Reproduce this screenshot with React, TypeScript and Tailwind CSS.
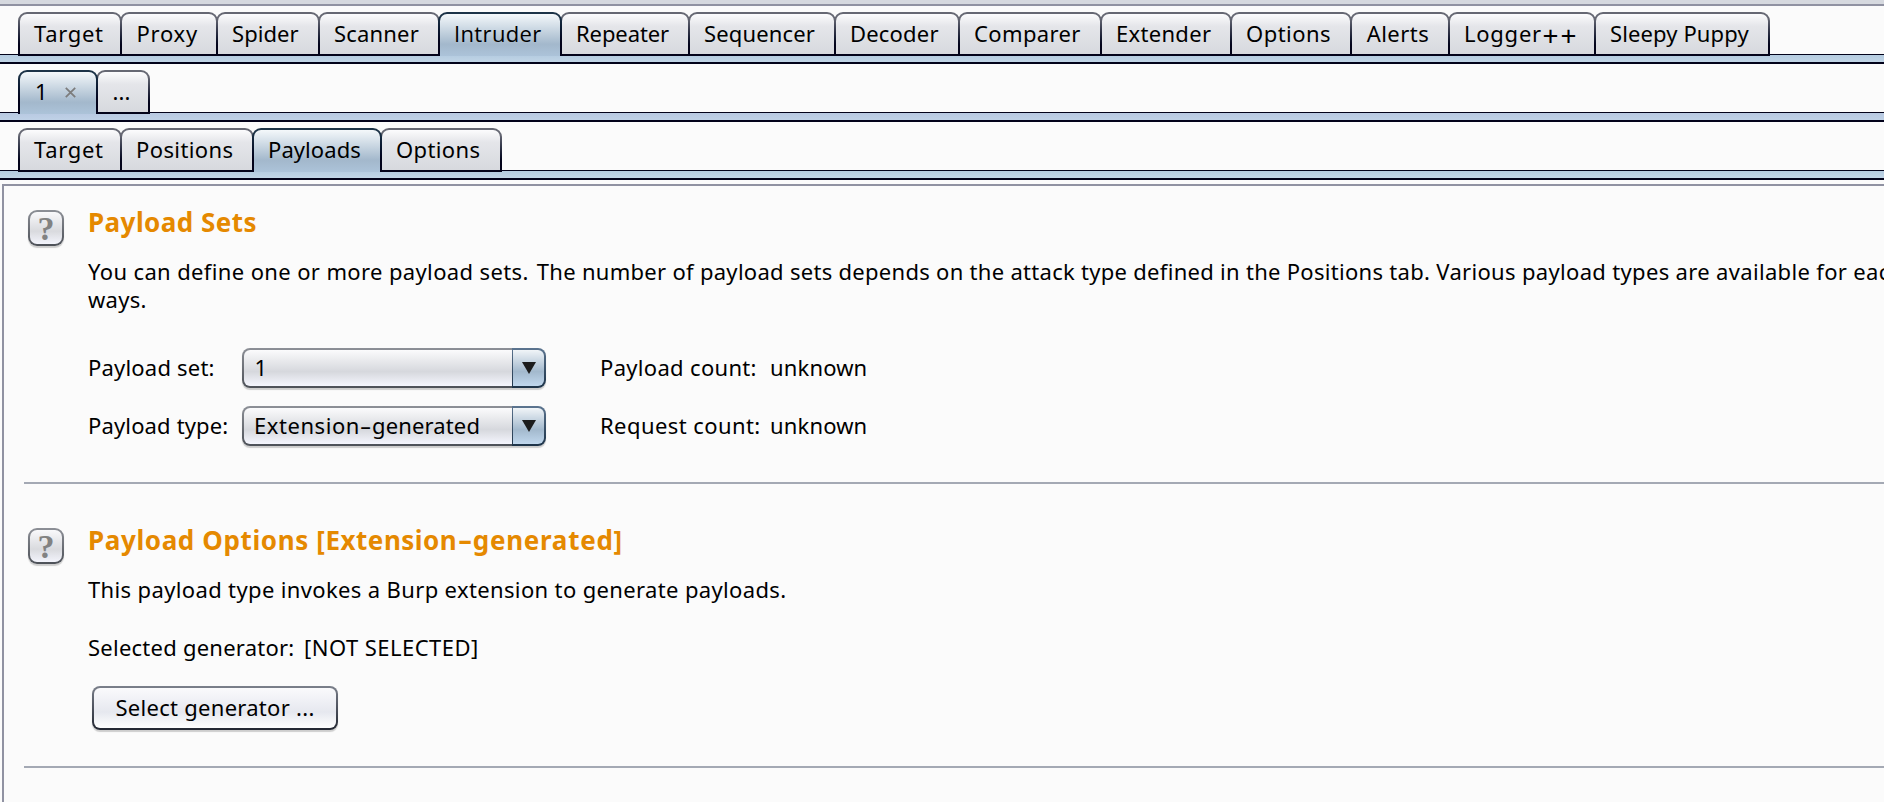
import type { ReactNode } from "react";

type TabProps = { width: string; selected?: boolean; className?: string; children: ReactNode };

function Tab({ width, selected = false, className = "", children }: TabProps) {
  return (
    <div
      className={`${width} ${className} box-border flex h-[44px] shrink-0 rounded-t-[9px] px-[2px] pt-[2px] ${
        selected
          ? "relative z-10 bg-linear-to-b from-[#1c3347] from-10% to-[#02021a] to-70% pb-0"
          : "bg-linear-to-b from-[#666873] from-15% to-[#03031a] to-75% pb-[2px]"
      }`}
    >
      <div
        className={`flex flex-1 items-start overflow-hidden rounded-t-[7px] pl-[14px] pt-[4px] leading-[30px] whitespace-nowrap ${
          selected
            ? "bg-linear-to-b from-[#f4f8fa] via-[#a3b8cc] via-72% to-[#acc3d9]"
            : "bg-linear-to-b from-[#fcfcfd] via-[#e5e6ea] via-30% to-[#d7d9de]"
        }`}
      >
        {children}
      </div>
    </div>
  );
}

function TabStrip({ children, tint = "from-[#b4cbe0] to-[#c1d5e6]" }: { children: ReactNode; tint?: string }) {
  return (
    <div className="h-[58px] pt-[6px]">
      <div className="relative z-10 flex pl-[18px]">{children}</div>
      <div className={`-mt-[2px] h-[10px] border-t border-b-2 border-[#02021a] bg-linear-to-b ${tint}`} />
    </div>
  );
}

const mainTabs = [
  { label: "Target", width: "w-[104px]", text: "tracking-[0.7px]" },
  { label: "Proxy", width: "w-[98px]", text: "tracking-[0.76px] pl-[0.5px]" },
  { label: "Spider", width: "w-[104px]", text: "tracking-[0.05px]" },
  { label: "Scanner", width: "w-[122px]", text: "tracking-[0.19px]" },
  { label: "Intruder", width: "w-[124px]", text: "font-['Open_Sans'] tracking-[0.36px]", selected: true },
  { label: "Repeater", width: "w-[130px]", text: "tracking-[-0.09px]" },
  { label: "Sequencer", width: "w-[148px]", text: "tracking-[0.14px]" },
  { label: "Decoder", width: "w-[126px]", text: "tracking-[0.19px]" },
  { label: "Comparer", width: "w-[144px]", text: "tracking-[0.38px]" },
  { label: "Extender", width: "w-[132px]", text: "tracking-[0.31px]" },
  { label: "Options", width: "w-[122px]", text: "tracking-[0.48px]" },
  { label: "Alerts", width: "w-[100px]", text: "tracking-[0.47px] pl-[0.7px]" },
  { label: "Logger", suffix: "++", width: "w-[148px]", text: "tracking-[0.75px]" },
  { label: "Sleepy Puppy", width: "w-[176px]", text: "tracking-[0.12px]" },
];

const intruderTabs = [
  { label: "Target", width: "w-[104px]", text: "tracking-[0.7px]" },
  { label: "Positions", width: "w-[134px]", text: "tracking-[0.39px]" },
  { label: "Payloads", width: "w-[130px]", text: "tracking-[0.08px]", selected: true },
  { label: "Options", width: "w-[122px]", text: "tracking-[0.38px]" },
];

function HelpButton() {
  return (
    <button className="mt-[6px] flex h-[36px] w-[36px] shrink-0 rounded-[9px] bg-linear-to-b from-[#8d9097] to-[#4d5158] p-[2px] shadow-[0_2px_1px_rgba(0,0,0,0.18)]">
      <span className="flex h-full w-full items-center justify-center rounded-[7px] bg-linear-to-b from-[#f9f9fb] via-[#d9dade] via-60% to-[#f3f4fc] pt-[2px] font-['Liberation_Serif'] text-[34px] leading-[30px] font-bold text-[#828282]">
        ?
      </span>
    </button>
  );
}

function Select({ children }: { children: ReactNode }) {
  return (
    <div className="flex h-[40px] w-[304px] rounded-[8px] shadow-[0_2px_1px_rgba(0,0,0,0.18)]">
      <div className="flex w-[270px] rounded-l-[8px] bg-linear-to-b from-[#8d9097] to-[#4d5158] py-[2px] pl-[2px]">
        <div className="flex-1 rounded-l-[6px] bg-linear-to-b from-[#fbfbfc] via-[#d6d8dd] via-60% to-[#f5f6fe] pt-[2px] pl-[10px] leading-[30px] whitespace-nowrap">
          {children}
        </div>
      </div>
      <div className="flex w-[34px] rounded-r-[8px] bg-linear-to-b from-[#5c7590] to-[#1d3348] py-[2px] pr-[2px] pl-px">
        <div className="flex-1 rounded-r-[6px] bg-linear-to-b from-[#f1f5f8] via-[#a3b9cd] via-60% to-[#c0d7ed] pt-[12px] pl-[9px]">
          <svg width="14" height="12" viewBox="0 0 14 12">
            <path d="M0 0H14L7 12Z" fill="#1c1c1c" />
          </svg>
        </div>
      </div>
    </div>
  );
}

function Hyphen({ className }: { className: string }) {
  return (
    <span className={`${className} inline-block text-center`}>
      <span className="inline-block scale-x-165">-</span>
    </span>
  );
}

export default function App() {
  return (
    <div className="flex h-[802px] w-[1884px] flex-col overflow-hidden bg-[#fbfbfb] font-['Noto_Sans',sans-serif] text-[22px] text-black">
      <div className="h-[6px] shrink-0 border-b-2 border-[#9092a2] bg-[#d6d9df]" />
      <div className="shrink-0">
        <TabStrip>
          {mainTabs.map((t, i) => (
            <Tab key={t.label} width={t.width} selected={t.selected} className={i ? "-ml-[2px]" : ""}>
              <span className={t.text}>{t.label}</span>
              {t.suffix && <span className="pt-[2px] pl-[0.5px] text-[28px] tracking-[2.2px]">{t.suffix}</span>}
            </Tab>
          ))}
        </TabStrip>
        <TabStrip tint="from-[#b8c9e2] to-[#bfd1e6]">
          <Tab width="w-[80px]" selected>
            <span className="pl-[1px]">1</span>
            <svg className="mt-[11px] ml-[17px]" width="11" height="11" viewBox="0 0 11 11">
              <path d="M0.8 0.8L10.2 10.2M10.2 0.8L0.8 10.2" stroke="#7d7d7d" strokeWidth="1.8" />
            </svg>
          </Tab>
          <Tab width="w-[54px]" className="-ml-[2px]">
            <span className="pl-[0.5px] tracking-[0.1px]">...</span>
          </Tab>
        </TabStrip>
        <TabStrip>
          {intruderTabs.map((t, i) => (
            <Tab key={t.label} width={t.width} selected={t.selected} className={i ? "-ml-[2px]" : ""}>
              <span className={t.text}>{t.label}</span>
            </Tab>
          ))}
        </TabStrip>
      </div>

      <div className="mt-[4px] ml-[2px] flex-1 border-t-2 border-l-2 border-[#9092a2]">
        <section className="flex h-[296px] pt-[18px] pl-[24px]">
          <HelpButton />
          <div className="ml-[24px] min-w-0 flex-1">
            <h2 className="text-[26px] leading-[36px] font-bold tracking-[0.45px] text-[#e58900]">Payload Sets</h2>
            <p className="mt-[17px] leading-[28px] whitespace-nowrap">
              <span className="inline-block w-[448.8px] tracking-[0.37px]">You can define one or more payload sets.</span>
              <span className="inline-block w-[899.5px] tracking-[0.29px]">
                The number of payload sets depends on the attack type defined in the Positions tab.
              </span>
              <span className="inline-block w-[410px] tracking-[0.33px]">Various payload types are available for</span>
              <span className="inline-block pl-[7px] tracking-[0.3px]">each</span>
              <br />
              <span className="tracking-[0.28px]">ways.</span>
            </p>
            <div className="mt-[35px] grid grid-cols-[154px_358px_170px_200px] gap-y-[18px] leading-[30px] whitespace-nowrap">
              <span className="pt-[4px] tracking-[0.2px]">Payload set:</span>
              <Select>
                <span className="pl-[0.5px]">1</span>
              </Select>
              <span className="pt-[4px] tracking-[0.32px]">Payload count:</span>
              <span className="pt-[4px] tracking-[0.15px]">unknown</span>
              <span className="pt-[4px] tracking-[0.15px]">Payload type:</span>
              <Select>
                <span className="tracking-[0.56px]">Extension</span>
                <Hyphen className="w-[12px]" />
                <span className="tracking-[0.14px]">generated</span>
              </Select>
              <span className="pt-[4px] tracking-[0.42px]">Request count:</span>
              <span className="pt-[4px] tracking-[0.15px]">unknown</span>
            </div>
          </div>
        </section>
        <div className="ml-[20px] h-[2px] bg-[#a4a9b4]" />
        <section className="flex h-[282px] pt-[38px] pl-[24px]">
          <HelpButton />
          <div className="ml-[24px] flex-1">
            <h2 className="text-[26px] leading-[36px] font-bold whitespace-nowrap text-[#e58900]">
              <span className="tracking-[0.62px]">Payload Options [</span>
              <span className="tracking-[0.5px]">Extension</span>
              <Hyphen className="w-[15.5px]" />
              <span className="tracking-[0.72px]">generated]</span>
            </h2>
            <p className="mt-[17px] leading-[28px] tracking-[0.36px]">
              This payload type invokes a Burp extension to generate payloads.
            </p>
            <div className="mt-[29px] flex leading-[30px]">
              <span className="w-[216px] tracking-[0.24px]">Selected generator:</span>
              <span className="tracking-[0.47px]">[NOT SELECTED]</span>
            </div>
            <button className="mt-[24px] ml-[4px] flex h-[44px] w-[246px] rounded-[8px] bg-linear-to-b from-[#7b808b] to-[#242833] p-[2px] shadow-[0_2px_1px_rgba(0,0,0,0.18)]">
              <span className="h-full flex-1 rounded-[6px] bg-linear-to-b from-[#fafafc] via-[#e6e8ef] via-60% to-[#ffffff] pt-[4px] pl-[21.5px] text-left leading-[30px] tracking-[0.28px] whitespace-nowrap">
                Select generator ...
              </span>
            </button>
          </div>
        </section>
        <div className="ml-[20px] h-[2px] bg-[#a4a9b4]" />
      </div>
    </div>
  );
}
